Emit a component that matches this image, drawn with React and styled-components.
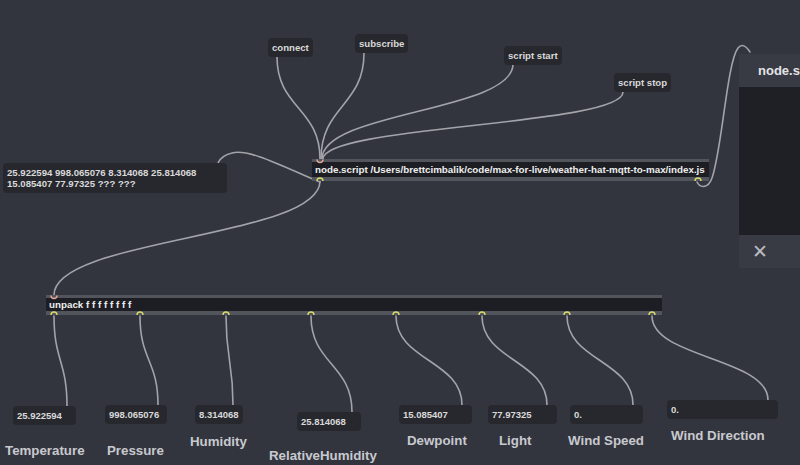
import React from 'react'
import styled, { createGlobalStyle } from 'styled-components'

const Global = createGlobalStyle`
    html, body {
        margin: 0;
        padding: 0;
        background: #33353e;
        overflow: hidden;
    }
    body {
        font-family: "Liberation Sans", Arial, sans-serif;
        font-weight: bold;
    }
`

const Canvas = styled.div`
    position: relative;
    width: 800px;
    height: 465px;
    overflow: hidden;
    background: #33353e;
`

const Wires = styled.svg`
    position: absolute;
    left: 0;
    top: 0;
    width: 800px;
    height: 465px;
    pointer-events: none;
    z-index: ${p => p.$z};
`

const Message = styled.div`
    position: absolute;
    left: ${p => p.$x}px;
    top: ${p => p.$y}px;
    height: 19px;
    padding: 0 4px;
    display: flex;
    align-items: center;
    background: #27282e;
    border-radius: 4px;
    color: #d9d9d9;
    font-size: 9.6px;
    white-space: nowrap;
    z-index: 1;
`

const Display = styled.div`
    position: absolute;
    left: 3px;
    top: 163px;
    width: 216px;
    height: 26px;
    padding: 4px 4px 0;
    background: #27282e;
    border-radius: 4px;
    color: #d9d9d9;
    font-size: 9.6px;
    line-height: 11px;
    z-index: 1;
`

const ObjectBox = styled.div`
    position: absolute;
    left: ${p => p.$x}px;
    top: ${p => p.$y}px;
    width: ${p => p.$w}px;
    height: ${p => p.$h}px;
    box-sizing: border-box;
    border-top: 3px solid #52555c;
    border-bottom: 4px solid #52555c;
    background: #1d1e23;
    color: #eeeeee;
    font-size: 9.8px;
    padding-left: 3px;
    display: flex;
    align-items: center;
    white-space: nowrap;
    z-index: 1;
`

const NumberBox = styled.div`
    position: absolute;
    left: ${p => p.$x}px;
    top: ${p => p.$y}px;
    width: ${p => p.$w}px;
    height: 19px;
    box-sizing: border-box;
    padding-left: 4px;
    display: flex;
    align-items: center;
    background: #27282e;
    border-radius: 4px;
    color: #d9d9d9;
    font-size: 9.5px;
    z-index: 1;
`

const Label = styled.div`
    position: absolute;
    left: ${p => p.$x}px;
    top: ${p => p.$y}px;
    color: #c8c9cf;
    font-size: 13.3px;
    line-height: 16px;
    white-space: nowrap;
    z-index: 1;
`

const Window = styled.div`
    position: absolute;
    left: 739px;
    top: 54px;
    width: 240px;
    height: 214px;
    display: flex;
    flex-direction: column;
    background: #393b44;
    z-index: 3;
`

const WindowHead = styled.div`
    height: 33px;
    display: flex;
    align-items: center;
    padding-left: 19px;
    color: #e4e4e6;
    font-size: 13px;
`

const WindowBody = styled.div`
    flex: 1;
    background: #1f2025;
`

const WindowFoot = styled.div`
    height: 33px;
    display: flex;
    align-items: center;
    padding-left: 13px;
    color: #b9babf;
    font-size: 19px;
    font-weight: normal;
`

const messages = [
    { x: 268, y: 38, text: 'connect' },
    { x: 355, y: 34, text: 'subscribe' },
    { x: 504, y: 46, text: 'script start' },
    { x: 614, y: 73, text: 'script stop' },
]

const outs = [54, 140, 226, 311, 396, 482, 567, 652]

const numbers = [
    { x: 13, y: 406, w: 63, v: '25.922594', end: 67 },
    { x: 105, y: 405, w: 62, v: '998.065076', end: 158 },
    { x: 195, y: 405, w: 48, v: '8.314068', end: 233 },
    { x: 297, y: 412, w: 64, v: '25.814068', end: 352 },
    { x: 399, y: 405, w: 73, v: '15.085407', end: 462 },
    { x: 488, y: 405, w: 69, v: '77.97325', end: 547 },
    { x: 570, y: 405, w: 73, v: '0.', end: 633 },
    { x: 667, y: 400, w: 111, v: '0.', end: 768 },
]

const labels = [
    { x: 5, y: 443, text: 'Temperature' },
    { x: 107, y: 443, text: 'Pressure' },
    { x: 190, y: 434, text: 'Humidity' },
    { x: 269, y: 448, text: 'RelativeHumidity' },
    { x: 407, y: 433, text: 'Dewpoint' },
    { x: 499, y: 433, text: 'Light' },
    { x: 568, y: 433, text: 'Wind Speed' },
    { x: 671, y: 428, text: 'Wind Direction' },
]

function cable(x1, y1, x2, y2) {
    const d = Math.max(18, Math.abs(y2 - y1) * 0.5)
    return `M ${x1} ${y1} C ${x1} ${y1 + d}, ${x2} ${y2 - d}, ${x2} ${y2}`
}

const cables = [
    cable(277, 57, 320, 159),
    cable(364, 53, 321, 159),
    cable(513, 64, 322, 159),
    cable(623, 92, 323, 159),
    cable(320, 181, 54, 295),
    'M 320 182 C 290 170, 250 148, 232 153 C 224 155, 220 158, 218 163',
    'M 697 182 C 700 188, 708 189, 712 178 C 722 150, 727 62, 738 48 C 742 43, 746 46, 750 52',
    ...numbers.map((n, i) => cable(outs[i], 316, n.end, n.y)),
]

function Inlet({ x, y }) {
    return <path d={`M ${x - 3} ${y + 0.5} A 3 3 0 0 0 ${x + 3} ${y + 0.5}`} stroke="#e3a593" strokeWidth="1.4" fill="none" />
}

function Outlet({ x, y }) {
    return <path d={`M ${x - 3} ${y} A 3 3 0 0 1 ${x + 3} ${y}`} stroke="#d9da6c" strokeWidth="1.4" fill="none" />
}

export default function App() {
    return (
        <Canvas>
            <Global />
            <Wires $z={0} viewBox="0 0 800 465">
                {cables.map((d, i) => (
                    <path key={i} d={d} stroke="#a2a4aa" strokeWidth="1.6" fill="none" strokeLinecap="round" />
                ))}
            </Wires>

            {messages.map(m => (
                <Message key={m.text} $x={m.x} $y={m.y}>{m.text}</Message>
            ))}

            <Display>
                25.922594 998.065076 8.314068 25.814068<br />
                15.085407 77.97325 ??? ???
            </Display>

            <ObjectBox $x={312} $y={159} $w={397} $h={22}>
                node.script /Users/brettcimbalik/code/max-for-live/weather-hat-mqtt-to-max/index.js
            </ObjectBox>

            <ObjectBox $x={46} $y={295} $w={616} $h={20}>
                unpack f f f f f f f f
            </ObjectBox>

            {numbers.map((n, i) => (
                <NumberBox key={i} $x={n.x} $y={n.y} $w={n.w}>{n.v}</NumberBox>
            ))}

            {labels.map(l => (
                <Label key={l.text} $x={l.x} $y={l.y}>{l.text}</Label>
            ))}

            <Wires $z={2} viewBox="0 0 800 465">
                <Inlet x={320} y={159} />
                <Outlet x={320} y={181} />
                <Outlet x={698} y={181} />
                <Inlet x={54} y={295} />
                {outs.map(x => <Outlet key={x} x={x} y={315} />)}
            </Wires>

            <Window>
                <WindowHead>node.script</WindowHead>
                <WindowBody />
                <WindowFoot>✕</WindowFoot>
            </Window>
        </Canvas>
    )
}
